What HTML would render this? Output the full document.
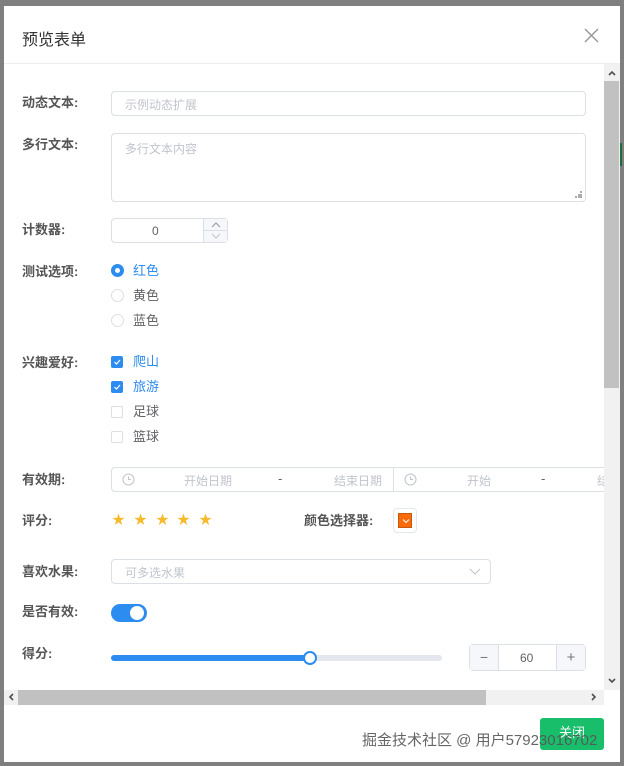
<!DOCTYPE html>
<html><head><meta charset="utf-8"><style>
*{box-sizing:border-box;margin:0;padding:0}
body{width:624px;height:766px;background:#7f7f7f;position:relative;overflow:hidden;font-family:"Liberation Sans","Noto Sans CJK SC",sans-serif;font-size:13px;color:#606266}
.a{position:absolute}
#dlg{left:4px;top:6px;width:616px;height:756px;background:#fff}
.lbl{position:absolute;left:22px;font-weight:bold;color:#555;font-size:13px;line-height:16px}
.inp{position:absolute;border:1px solid #dcdfe6;border-radius:4px;background:#fff}
.ph{color:#c0c4cc;font-size:12px;position:absolute}
.radio{position:absolute;left:111px;width:13px;height:13px;border-radius:50%;border:1px solid #dcdfe6}
.cb{position:absolute;left:111px;width:12px;height:12px;border:1px solid #dcdfe6;border-radius:2px;background:#fff}
.cb.on{background:#2d8cf0;border-color:#2d8cf0}
.opt{position:absolute;left:133px;font-size:13px;line-height:16px;color:#606266}
.star{position:absolute;top:512px;color:#f7ba2a;font-size:13px;line-height:16px}
</style></head><body>
<div class="a" style="left:620px;top:143px;width:2px;height:23px;background:#1f6b3a"></div>
<div id="dlg" class="a"></div>
<div class="a" style="left:22px;top:26px;font-size:16px;color:#303133">预览表单</div>
<svg class="a" style="left:584px;top:28px" width="15" height="15"><path d="M1 1L14 14M14 1L1 14" stroke="#909399" stroke-width="1.3"/></svg>
<div class="a" style="left:4px;top:63px;width:616px;height:1px;background:#eee"></div>

<div class="lbl" style="top:95px">动态文本:</div>
<div class="inp" style="left:111px;top:91px;width:475px;height:25px"><span class="ph" style="left:13px;top:4px">示例动态扩展</span></div>

<div class="lbl" style="top:137px">多行文本:</div>
<div class="inp" style="left:111px;top:133px;width:475px;height:69px"><span class="ph" style="left:13px;top:6px">多行文本内容</span>
<svg class="a" style="right:3px;bottom:3px" width="7" height="7"><g fill="#aaa"><rect x="5" y="0" width="2" height="2"/><rect x="3" y="3" width="2" height="2"/><rect x="5" y="3" width="2" height="2"/><rect x="0" y="5" width="2" height="2"/><rect x="3" y="5" width="2" height="2"/><rect x="5" y="5" width="2" height="2"/></g></svg></div>

<div class="lbl" style="top:222px">计数器:</div>
<div class="inp" style="left:111px;top:218px;width:117px;height:25px"><span class="a" style="left:40px;top:5px;font-size:12px;color:#606266">0</span>
<div class="a" style="left:91px;top:0;width:24px;height:23px;border-left:1px solid #dcdfe6;background:#f5f7fa"><div class="a" style="left:0;top:11px;width:24px;height:1px;background:#dcdfe6"></div>
<svg class="a" style="left:7px;top:3px" width="10" height="6"><path d="M1 5L5 1L9 5" stroke="#999" fill="none"/></svg>
<svg class="a" style="left:7px;top:14px" width="10" height="6"><path d="M1 1L5 5L9 1" stroke="#c0c4cc" fill="none"/></svg></div></div>

<div class="lbl" style="top:264px">测试选项:</div>
<div class="radio" style="top:264px;border:4px solid #2d8cf0;background:#fff"></div>
<div class="opt" style="top:263px;color:#2d8cf0">红色</div>
<div class="radio" style="top:289px"></div><div class="opt" style="top:288px">黄色</div>
<div class="radio" style="top:314px"></div><div class="opt" style="top:313px">蓝色</div>

<div class="lbl" style="top:355px">兴趣爱好:</div>
<div class="cb on" style="top:356px"><svg width="10" height="10" class="a" style="left:0;top:0"><path d="M2.5 5L4.5 7L8 3" stroke="#fff" stroke-width="1.2" fill="none"/></svg></div><div class="opt" style="top:354px;color:#2d8cf0">爬山</div>
<div class="cb on" style="top:381px"><svg width="10" height="10" class="a" style="left:0;top:0"><path d="M2.5 5L4.5 7L8 3" stroke="#fff" stroke-width="1.2" fill="none"/></svg></div><div class="opt" style="top:379px;color:#2d8cf0">旅游</div>
<div class="cb" style="top:406px"></div><div class="opt" style="top:404px">足球</div>
<div class="cb" style="top:431px"></div><div class="opt" style="top:429px">篮球</div>

<div class="lbl" style="top:472px">有效期:</div>
<div class="inp" style="left:111px;top:467px;width:283px;height:25px;border-radius:4px 0 0 4px">
<svg class="a" style="left:10px;top:5px" width="13" height="13"><circle cx="6.5" cy="6.5" r="5.5" stroke="#c0c4cc" fill="none"/><path d="M6.5 3.5V6.5H9" stroke="#c0c4cc" fill="none"/></svg>
<span class="ph" style="left:72px;top:4px">开始日期</span><span class="a" style="left:166px;top:3px;font-size:13px">-</span><span class="ph" style="left:222px;top:4px">结束日期</span></div>
<div class="inp" style="left:393px;top:467px;width:220px;height:25px;border-radius:0;border-right:none">
<svg class="a" style="left:10px;top:5px" width="13" height="13"><circle cx="6.5" cy="6.5" r="5.5" stroke="#c0c4cc" fill="none"/><path d="M6.5 3.5V6.5H9" stroke="#c0c4cc" fill="none"/></svg>
<span class="ph" style="left:73px;top:4px">开始</span><span class="a" style="left:147px;top:3px;font-size:13px">-</span><span class="ph" style="left:203px;top:4px">结</span></div>

<div class="lbl" style="top:513px">评分:</div>
<span class="star" style="left:112px">★</span><span class="star" style="left:134px">★</span><span class="star" style="left:156px">★</span><span class="star" style="left:177px">★</span><span class="star" style="left:199px">★</span>
<div class="lbl" style="left:304px;top:513px">颜色选择器:</div>
<div class="inp" style="left:393px;top:508px;width:24px;height:25px;border-color:#e4e7ed"><div class="a" style="left:4px;top:4px;width:14px;height:15px;background:#f86a0a;border:1px solid #c85a10"><svg class="a" style="left:3px;top:4px" width="8" height="6"><path d="M1 1.5L4 4.5L7 1.5" stroke="#fff" fill="none"/></svg></div></div>

<div class="lbl" style="top:564px">喜欢水果:</div>
<div class="inp" style="left:111px;top:559px;width:380px;height:25px"><span class="ph" style="left:13px;top:4px">可多选水果</span>
<svg class="a" style="left:357px;top:8px" width="12" height="8"><path d="M1 1L6 6L11 1" stroke="#c0c4cc" fill="none"/></svg></div>

<div class="lbl" style="top:604px">是否有效:</div>
<div class="a" style="left:111px;top:604px;width:36px;height:18px;border-radius:9px;background:#2d8cf0"><div class="a" style="left:19px;top:2px;width:14px;height:14px;border-radius:50%;background:#fff"></div></div>

<div class="lbl" style="top:646px">得分:</div>
<div class="a" style="left:111px;top:655px;width:331px;height:6px;border-radius:3px;background:#e4e7ed"></div>
<div class="a" style="left:111px;top:655px;width:199px;height:6px;border-radius:3px;background:#2d8cf0"></div>
<div class="a" style="left:303px;top:651px;width:14px;height:14px;border-radius:50%;background:#fff;border:2px solid #2d8cf0"></div>
<div class="inp" style="left:469px;top:644px;width:117px;height:27px">
<div class="a" style="left:0;top:0;width:29px;height:25px;background:#f5f7fa;border-right:1px solid #dcdfe6;text-align:center;line-height:25px;color:#777;font-size:14px">−</div>
<span class="a" style="left:50px;top:6px;font-size:12px;color:#606266">60</span>
<div class="a" style="right:0;top:0;width:29px;height:25px;background:#f5f7fa;border-left:1px solid #dcdfe6;text-align:center;line-height:25px;color:#777;font-size:15px">+</div></div>

<div class="a" style="left:604px;top:64px;width:16px;height:626px;background:#f1f1f1"></div>
<div class="a" style="left:604px;top:81px;width:15px;height:307px;background:#c1c1c1"></div>
<svg class="a" style="left:608px;top:70px" width="8" height="6"><path d="M1 5L4 2L7 5" stroke="#505050" stroke-width="1.6" fill="none"/></svg>
<svg class="a" style="left:608px;top:678px" width="8" height="6"><path d="M1 1L4 4L7 1" stroke="#505050" stroke-width="1.6" fill="none"/></svg>
<div class="a" style="left:4px;top:690px;width:600px;height:15px;background:#f1f1f1"></div>
<div class="a" style="left:18px;top:690px;width:468px;height:15px;background:#c1c1c1"></div>
<svg class="a" style="left:8px;top:693px" width="6" height="8"><path d="M5 1L2 4L5 7" stroke="#505050" stroke-width="1.6" fill="none"/></svg>
<svg class="a" style="left:591px;top:693px" width="6" height="8"><path d="M1 1L4 4L1 7" stroke="#505050" stroke-width="1.6" fill="none"/></svg>

<div class="a" style="left:540px;top:718px;width:64px;height:32px;background:#19be6b;border-radius:3px;color:#fff;font-size:13px;text-align:center;line-height:30px">关闭</div>
<div class="a" style="left:362px;top:729px;font-size:15px;color:#555;white-space:nowrap;opacity:.9">掘金技术社区 @ 用户5792301670​2</div>
</body></html>
